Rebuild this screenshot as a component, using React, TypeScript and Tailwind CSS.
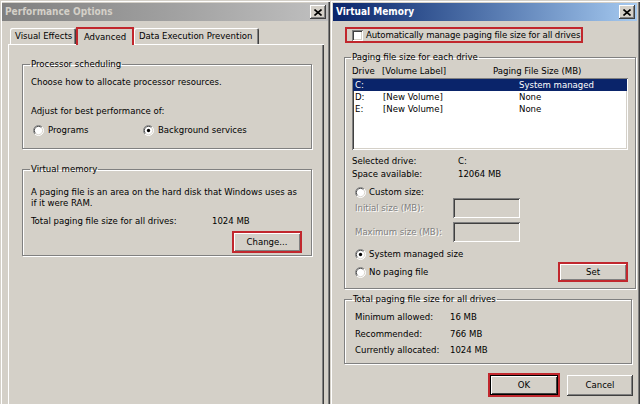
import React from 'react';

// Two classic Windows dialogs side by side: Performance Options + Virtual Memory
const RAISED = 'shadow-[inset_-1px_-1px_#404040,inset_1px_1px_#fff,inset_-2px_-2px_#808080,inset_2px_2px_#d4d0c8]';
const SUNKEN = 'shadow-[inset_1px_1px_#808080,inset_-1px_-1px_#fff,inset_2px_2px_#404040,inset_-2px_-2px_#d4d0c8]';
const FRAME = 'shadow-[inset_1px_1px_#d4d0c8,inset_2px_2px_#fff,inset_-1px_-1px_#404040,inset_-2px_-2px_#808080]';
const ETCHED = 'border border-[#808080] shadow-[inset_1px_1px_#fff,1px_1px_#fff]';
const DISABLED = 'text-[#808080] [text-shadow:1px_1px_0_#fff]';

const CloseButton = () => (
  <div className={`w-[16px] h-[14px] bg-[#d4d0c8] flex items-center justify-center ${RAISED}`}>
    <svg width="8" height="7" viewBox="0 0 8 7">
      <path d="M0.5 0.5 L7.5 6.5 M7.5 0.5 L0.5 6.5" stroke="#000" strokeWidth="1.6" />
    </svg>
  </div>
);

const TitleBar = ({ title, active }: { title: string; active?: boolean }) => (
  <div
    className={`h-[18px] flex items-center justify-between pl-[3px] pr-[2px] ${
      active
        ? 'bg-linear-to-r from-[#0a246a] to-[#a6caf0] text-white'
        : 'bg-linear-to-r from-[#808080] to-[#c0c0c0] text-[#d4d0c8]'
    }`}
  >
    <span className="font-bold text-[10px] leading-none">{title}</span>
    <CloseButton />
  </div>
);

const Radio = ({ checked }: { checked?: boolean }) => (
  <svg width="11" height="11" viewBox="0 0 12 12" className="shrink-0">
    <circle cx="6" cy="6" r="5.5" fill="#fff" />
    <path d="M2.1 9.9 A5.5 5.5 0 0 1 9.9 2.1" stroke="#808080" fill="none" />
    <path d="M2.8 9.2 A4.5 4.5 0 0 1 9.2 2.8" stroke="#404040" fill="none" />
    <path d="M9.9 2.1 A5.5 5.5 0 0 1 2.1 9.9" stroke="#fff" fill="none" />
    <path d="M9.2 2.8 A4.5 4.5 0 0 1 2.8 9.2" stroke="#d4d0c8" fill="none" />
    {checked && <circle cx="6" cy="6" r="1.8" fill="#000" />}
  </svg>
);

const Checkbox = () => <div className={`w-[11px] h-[11px] bg-white shrink-0 ${SUNKEN}`} />;

const Button = ({ label, className }: { label: string; className: string }) => (
  <div className={`flex items-center justify-center bg-[#d4d0c8] ${className}`}>{label}</div>
);

const RedButton = ({ label, className }: { label: string; className: string }) => (
  <div className={`flex items-center justify-center bg-[#d4d0c8] border-2 border-[#c1272d] shadow-[inset_1px_1px_#fff,inset_-1px_-1px_#808080] ${className}`}>
    {label}
  </div>
);

const PerformanceOptions = () => (
  <div className={`w-[330px] h-[412px] shrink-0 flex flex-col pl-[2px] pr-[2px] pt-[3px] ${FRAME}`}>
    <TitleBar title="Performance Options" />
    <div className="flex-1 flex flex-col pt-[6px] ml-[6px] mr-[4px]">
      {/* tabs */}
      <div className="flex items-end pl-[2px] -mb-px relative z-10">
        <div className="w-[66px] h-[16px] mb-px flex items-center pl-[5px] rounded-t-[2px] shadow-[inset_1px_1px_#fff,inset_-1px_0_#404040,inset_-2px_0_#808080]">
          Visual Effects
        </div>
        <div className="w-[58px] h-[18px] flex items-center justify-center bg-[#d4d0c8] border-2 border-b-0 border-[#c1272d]">
          Advanced
        </div>
        <div className="w-[125px] h-[16px] mb-px flex items-center pl-[5px] rounded-t-[2px] shadow-[inset_1px_1px_#fff,inset_-1px_0_#404040,inset_-2px_0_#808080]">
          Data Execution Prevention
        </div>
      </div>
      {/* tab page */}
      <div className="flex-1 pl-[14px] pr-[12px] pt-[14px] shadow-[inset_1px_1px_#fff,inset_-1px_0_#404040,inset_-2px_0_#808080]">
        <fieldset className={`h-[91px] pl-[8px] pr-[9px] ${ETCHED}`}>
          <legend className="px-[1px] -ml-[1px] leading-[12px]">Processor scheduling</legend>
          <div className="mt-[6px] leading-[12px]">Choose how to allocate processor resources.</div>
          <div className="mt-[17px] leading-[12px]">Adjust for best performance of:</div>
          <div className="mt-[7px] flex items-center h-[12px] pl-[2px]">
            <div className="w-[110px] flex items-center gap-[4px]">
              <Radio />
              <span>Programs</span>
            </div>
            <div className="flex items-center gap-[4px]">
              <Radio checked />
              <span>Background services</span>
            </div>
          </div>
        </fieldset>

        <fieldset className={`mt-[14px] h-[93px] pl-[8px] pr-[9px] ${ETCHED}`}>
          <legend className="px-[1px] -ml-[1px] leading-[12px]">Virtual memory</legend>
          <div className="mt-[11px] leading-[11px] whitespace-nowrap">
            A paging file is an area on the hard disk that Windows uses as
            <br />
            if it were RAM.
          </div>
          <div className="mt-[7px] leading-[11px] flex">
            <span className="w-[181px]">Total paging file size for all drives:</span>
            <span>1024 MB</span>
          </div>
          <div className="mt-[5px] flex justify-end">
            <RedButton label="Change..." className="w-[70px] h-[22px]" />
          </div>
        </fieldset>
      </div>
    </div>
  </div>
);

const drives = [
  { drive: 'C:', label: '', size: 'System managed', selected: true },
  { drive: 'D:', label: '[New Volume]', size: 'None' },
  { drive: 'E:', label: '[New Volume]', size: 'None' },
];

const VirtualMemory = () => (
  <div className={`w-[310px] h-[412px] shrink-0 flex flex-col px-[3px] pt-[3px] ${FRAME}`}>
    <TitleBar title="Virtual Memory" active />
    <div className="flex flex-col pl-[11px] pr-[5px] pt-[6px]">
      <div className="ml-[1px] w-[238px] h-[16px] border-2 border-[#c1272d] flex items-center gap-[3px] pl-[5px] whitespace-nowrap">
        <Checkbox />
        <span className="tracking-[-0.1px]">Automatically manage paging file size for all drives</span>
      </div>

      <fieldset className={`mt-[8px] h-[238px] pl-[7px] pr-[7px] ${ETCHED}`}>
        <legend className="px-[1px] -ml-[1px] leading-[12px]">Paging file size for each drive</legend>
        <div className="mt-[2px] flex leading-[12px]">
          <span className="w-[30px]">Drive</span>
          <span className="w-[111px]">[Volume Label]</span>
          <span>Paging File Size (MB)</span>
        </div>
        <div className={`mt-[1px] w-[276px] h-[72px] bg-white p-[1px] ${SUNKEN}`}>
          {drives.map(d => (
            <div
              key={d.drive}
              className={`h-[12px] flex items-center pl-[2px] ${d.selected ? 'bg-[#0a246a] text-white' : ''}`}
            >
              <span className="w-[28px]">{d.drive}</span>
              <span className="w-[136px]">{d.label}</span>
              <span>{d.size}</span>
            </div>
          ))}
        </div>
        <div className="mt-[4px] flex leading-[13px]">
          <span className="w-[106px]">Selected drive:</span>
          <span>C:</span>
        </div>
        <div className="flex leading-[13px]">
          <span className="w-[106px]">Space available:</span>
          <span>12064 MB</span>
        </div>
        <div className="mt-[6px] h-[12px] flex items-center gap-[3px] pl-[3px]">
          <Radio />
          <span>Custom size:</span>
        </div>
        <div className="h-[20px] flex items-center pl-[3px]">
          <span className={`w-[98px] ${DISABLED}`}>Initial size (MB):</span>
          <div className={`w-[67px] h-[20px] bg-[#d4d0c8] ${SUNKEN}`} />
        </div>
        <div className="mt-[4px] h-[20px] flex items-center pl-[3px]">
          <span className={`w-[98px] ${DISABLED}`}>Maximum size (MB):</span>
          <div className={`w-[67px] h-[20px] bg-[#d4d0c8] ${SUNKEN}`} />
        </div>
        <div className="mt-[6px] h-[12px] flex items-center gap-[3px] pl-[3px]">
          <Radio checked />
          <span>System managed size</span>
        </div>
        <div className="mt-[2px] h-[20px] flex items-center justify-between pl-[3px]">
          <div className="flex items-center gap-[3px]">
            <Radio />
            <span>No paging file</span>
          </div>
          <RedButton label="Set" className="w-[70px] h-[20px]" />
        </div>
      </fieldset>

      <fieldset className={`mt-[4px] h-[71px] pl-[10px] ${ETCHED}`}>
        <legend className="px-[1px] -ml-[3px] leading-[12px]">Total paging file size for all drives</legend>
        <div className="mt-[4px] flex flex-col">
          {[
            ['Minimum allowed:', '16 MB'],
            ['Recommended:', '766 MB'],
            ['Currently allocated:', '1024 MB'],
          ].map(([k, v]) => (
            <div key={k} className="h-[16.5px] flex items-center">
              <span className="w-[95px]">{k}</span>
              <span>{v}</span>
            </div>
          ))}
        </div>
      </fieldset>

      <div className="mt-[9px] flex justify-end items-center gap-[7px] -mr-[1px]">
        <div className="w-[72px] h-[24px] border-2 border-[#c1272d] bg-[#d4d0c8] flex items-center justify-center shadow-[inset_1px_1px_#000,inset_-1px_-1px_#000,inset_2px_2px_#fff,inset_-2px_-2px_#404040]">
          OK
        </div>
        <Button label="Cancel" className={`w-[66px] h-[21px] ${RAISED}`} />
      </div>
    </div>
  </div>
);

export default function App() {
  return (
    <div className="w-[640px] h-[404px] overflow-hidden flex bg-[#d4d0c8] text-black text-[9.5px] font-[family-name:'DejaVu_Sans_Condensed','Liberation_Sans',sans-serif]">
      <PerformanceOptions />
      <VirtualMemory />
    </div>
  );
}
